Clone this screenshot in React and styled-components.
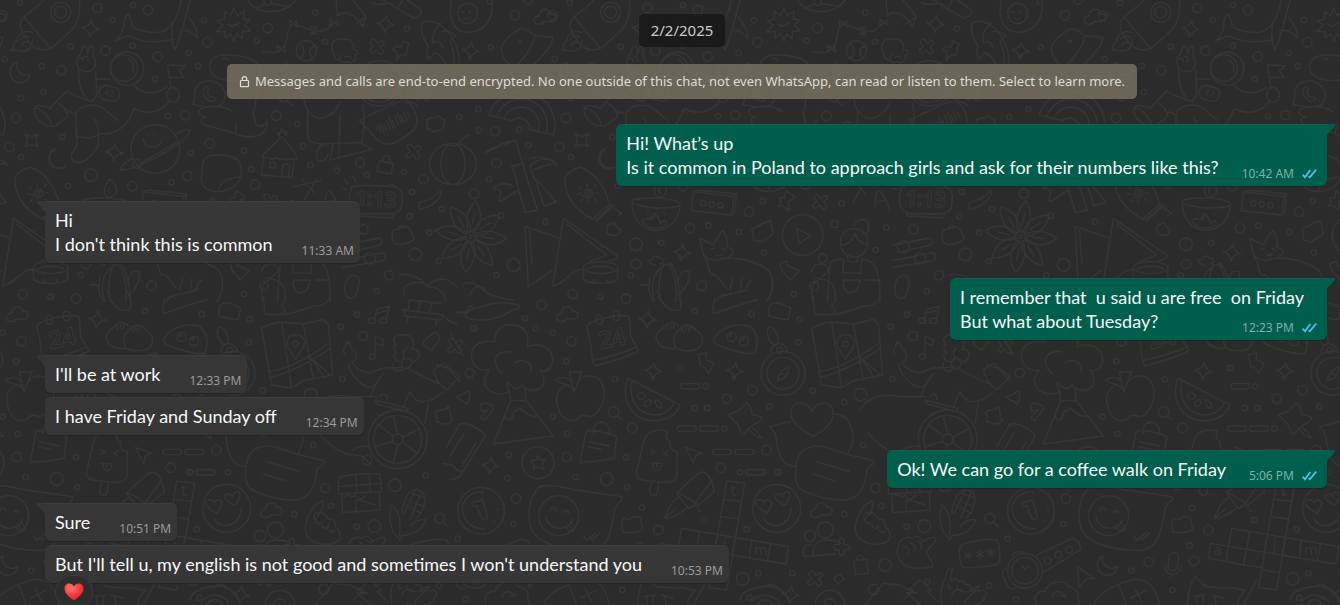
import React from 'react'
import styled, { createGlobalStyle, css } from 'styled-components'

const GlobalStyle = createGlobalStyle`
    * {
        box-sizing: border-box;
    }
    body {
        margin: 0;
        background-color: #2b2b2b;
        font-family: "Segoe UI", "Noto Sans", "Open Sans", sans-serif;
    }
`

const Chat = styled.main`
    position: relative;
    z-index: 0;
    height: 100vh;
    overflow: hidden;
    padding: 14px 13px 0 45px;
    display: flex;
    flex-direction: column;
`

const Wallpaper = styled.svg`
    position: absolute;
    inset: 0;
    z-index: -1;
    width: 100%;
    height: 100%;
`

const Notices = styled.header`
    display: flex;
    flex-direction: column;
    align-items: center;
    gap: 17px;
    margin-bottom: 25px;
    padding-right: 8px;
`

const DateChip = styled.time`
    padding: 0 12px;
    border-radius: 5px;
    background-color: rgba(24,24,24,0.85);
    color: #cbcbcb;
    font-size: 15px;
    line-height: 33px;
`

const EncryptionNotice = styled.button`
    display: flex;
    align-items: center;
    gap: 5px;
    padding: 0 12px;
    border: 0;
    border-radius: 5px;
    background-color: rgba(127,120,102,0.76);
    color: #dedcd7;
    font-family: inherit;
    font-size: 13px;
    line-height: 35px;
    white-space: nowrap;
`

const Thread = styled.section`
    display: flex;
    flex-direction: column;
    gap: 15px;
`

const Group = styled.div`
    display: flex;
    flex-direction: column;
    align-items: ${props => props.$mine ? 'flex-end' : 'flex-start'};
    gap: 4px;
`

const tail = css`
    &::before {
        content: "";
        position: absolute;
        top: 0;
        width: 8px;
        height: 11px;
        background-color: inherit;
        ${props => props.$mine
            ? 'left: 100%; clip-path: polygon(0 0, 100% 0, 100% 2px, 0 100%);'
            : 'right: 100%; clip-path: polygon(0 0, 100% 0, 100% 100%, 0 2px);'}
    }
`

const Bubble = styled.article`
    position: relative;
    padding: 7px ${props => props.$mine ? 10 : 6}px 4px 10px;
    border-radius: 6px;
    background-color: ${props => props.$mine ? '#005e4c' : '#363636'};
    box-shadow: 0 1px 1px rgba(0,0,0,0.2), inset 0 1px 0 rgba(255,255,255,0.04);
    color: #f8f8f8;
    font-family: "Segoe UI", Lato, "Noto Sans", sans-serif;
    font-size: 18px;
    line-height: 24px;
    white-space: pre;
    ${props => props.$tail && tail}
    ${props => props.$tail && (props.$mine ? 'border-top-right-radius: 0;' : 'border-top-left-radius: 0;')}
`

const Line = styled.div`
    padding-right: 13px;
`

const LastLine = styled.div`
    display: flex;
    align-items: flex-end;
    justify-content: space-between;
    gap: ${props => props.$mine ? 23 : 29}px;
`

const LastText = styled.span`
    padding-bottom: 3px;
`

const Meta = styled.span`
    display: flex;
    align-items: center;
    gap: 8px;
    color: ${props => props.$mine ? '#7fb0a6' : '#9b9b9b'};
    font-family: "Segoe UI", "Noto Sans", sans-serif;
    font-size: 12px;
    line-height: 17px;
`

const Reaction = styled.button`
    position: absolute;
    top: 30px;
    left: 10px;
    width: 38px;
    height: 34px;
    padding: 0;
    display: flex;
    align-items: center;
    justify-content: center;
    border: 1px solid #3a3a3a;
    border-radius: 17px;
    background-color: #2d2d2d;
`

const LockIcon = () => (
    <svg width="11" height="14" viewBox="0 0 11 14" fill="none" stroke="currentColor" strokeWidth="1.2" aria-hidden="true">
        <rect x="1.5" y="5.500" width="8" height="6.200" rx="0.800" />
        <path d="M3.300 5.500V3.800a2.200 2.200 0 0 1 4.400 0v1.700" />
    </svg>
)

const ReadIcon = () => (
    <svg width="15" height="10" viewBox="0 0 15 10" fill="none" stroke="#53bdeb" strokeWidth="1.8" aria-label="Read">
        <path d="M0.700 5.700 3 8.300 8.300 1M6.600 7.200 7.800 8.300 14.200 0.700" />
    </svg>
)

const HeartIcon = () => (
    <svg width="20" height="18" viewBox="0 0 21 19" aria-hidden="true">
        <defs>
            <radialGradient id="heart" cx="0.35" cy="0.25" r="0.8">
                <stop offset="0" stopColor="#ff7b74" />
                <stop offset="0.5" stopColor="#f8403f" />
                <stop offset="1" stopColor="#d81f2c" />
            </radialGradient>
        </defs>
        <path fill="url(#heart)" d="M10.500 18.500C6 15.300.5 11 .5 5.800.5 2.700 2.800.6 5.500.6c2.200 0 4 1.300 5 3.200 1-1.900 2.800-3.200 5-3.200 2.700 0 5 2.100 5 5.200 0 5.200-5.500 9.500-10 12.700z" />
    </svg>
)

// wallpaper tile, drawn at three times its size: 1650 x 1815 units
const smallDots = [
    [60, 8], [338, 60], [399, 15], [612, 61], [770, 122], [946, 38], [975, 126], [1221, 86], [212, 140],
    [398, 137], [566, 159], [594, 199], [465, 237], [14, 177], [125, 198], [131, 276], [63, 295], [504, 349],
    [892, 372], [187, 411], [63, 471], [573, 459], [732, 452], [910, 439], [931, 495], [1011, 512], [1101, 525],
    [1212, 516], [204, 558], [515, 547], [754, 508], [1236, 576], [1326, 627], [1228, 649], [1288, 698],
    [1316, 784], [1130, 874], [732, 882], [151, 890], [242, 826], [1470, 5], [1472, 142], [1435, 328],
    [1378, 351], [1437, 391], [1558, 389], [1585, 435], [1467, 538], [1502, 647], [1489, 826], [1636, 665],
    [334, 729], [475, 677], [638, 603], [567, 696], [642, 758], [1009, 683], [977, 750], [875, 610],
    [49, 1084], [8, 998], [435, 933], [605, 943], [749, 958], [746, 1027], [788, 1172], [1071, 944],
    [1022, 980], [1027, 1137], [228, 1372], [52, 1302], [232, 1462], [77, 1431], [570, 1417], [684, 1417],
    [1277, 1426], [883, 1543], [993, 1518], [1070, 1580], [590, 1588], [8, 1250], [1575, 954], [1607, 985],
    [1422, 985], [195, 1138], [390, 1104], [434, 1224], [472, 1224], [466, 1159], [523, 1286], [658, 1220],
    [940, 1335], [883, 1207], [1526, 1365], [1522, 1434], [1540, 1572], [1373, 1616], [276, 1523],
    [462, 1560], [625, 1720], [727, 1720], [598, 1793], [217, 1770], [1398, 1798], [1317, 1757],
    [1133, 1745], [94, 1712], [269, 1636],
]

const dots = [
    [8, 46], [292, 24], [444, 30], [803, 84], [622, 127], [316, 152], [473, 170], [184, 211], [48, 354],
    [556, 346], [829, 347], [28, 441], [629, 430], [1080, 488], [397, 559], [562, 528], [765, 554],
    [1271, 538], [1090, 688], [1167, 826], [455, 857], [68, 883], [228, 896], [1545, 46], [1585, -2],
    [1485, 394], [1489, 490], [1422, 581], [258, 792], [420, 685], [597, 635], [64, 1024], [1089, 1008],
    [50, 1371], [512, 1403], [649, 1350], [976, 1464], [1625, 915], [530, 1196], [607, 1171], [247, 1283],
    [1548, 1496], [325, 1590], [146, 1686], [282, 1683],
]

const bigDots = [
    [273, 526], [1246, 763], [1541, 795], [258, 733], [932, 1184], [170, 1437], [1185, 1456], [1123, 1578],
    [578, 1737], [1005, 1695],
]

const sparkles = [
    [272, 86], [1157, 72], [1412, 152], [857, 215], [343, 457], [396, 758], [292, 958], [310, 1113],
    [555, 1113], [1471, 1397], [722, 1784],
]

const crosses = [[1130, 140], [1240, 455], [810, 605], [1269, 280], [1365, 1038], [795, 1736]]

const clouds = [[1635, 50], [52, 942], [814, 1530]]

const petals = [10, 55, 95, 145, 190, 235, 282, 328]

const Sky = () => (
    <g>
        <path d="M62 65C68 45 120 20 135-5M62 65C55 90 75 110 90 130C110 155 145 155 165 135L215 90C235 70 245 20 236-5M75 55 150 143" />
        <circle cx="182" cy="37" r="30" />
        <circle cx="182" cy="37" r="18" />
        <path d="M97 98C75 90 50 100 52 122C38 125 42 140 36 150C48 146 56 156 72 153C92 150 97 135 97 120M62 118C68 106 80 106 90 112M65 136C72 122 84 124 90 132" />
        <path d="M348 122C360 110 370 95 372 75C370 60 375 50 385 42C390 55 398 65 396 80C410 88 430 98 470 98C515 95 535 50 545-5M348 122C360 118 375 108 385 108C420 125 470 130 520 118M520 65C512 90 515 130 524 150C540 125 550 70 572-5M548 92C565 88 580 100 592 114C597 95 580 70 566 52" />
        <path d="M701 23 712 47 732 33 730 57 750 60 733 75 751 93 728 94 726 116 710 101 702 124 692 101 676 114 675 94 650 95 669 76 652 62 673 58 674 34 692 47zM684 72 696 80 718 68" />
        <path d="M740-4C765 48 860 48 888-4M765 25 795 12M812 10 870 20" />
        <circle cx="803" cy="5" r="11" />
        <path d="M1008-4 1012 48C1030 28 1065 40 1088 80L1098 50 1055-4M1068 72 1096 52M1001 66C970 112 940 92 880 72C850 92 870 130 845 145C830 165 810 155 788 155" />
        <path d="M868 60 890 80 890 62 870 80zM932 80 948 102 933 102 950 82zM990 58 1014 74 1012 60 990 78zM832 136 856 156 854 138 834 156z" />
        <circle cx="919" cy="152" r="30" />
        <path d="M900 130C915 145 915 160 903 176M946 138C928 140 925 165 938 174" />
        <path d="M1115 8C1140 22 1155 5 1178 12M1140-5 1230 48C1248 62 1268 45 1262 28L1215-4M1196 20 1210-4" />
        <path d="M1263 80C1265 60 1295 58 1320 75C1350 90 1378 140 1378 195M1263 80C1265 110 1275 125 1284 138C1278 155 1282 172 1288 178L1303 158C1325 165 1335 180 1340 205M1322 70C1300 90 1295 110 1300 130C1315 118 1325 130 1330 145M1325 95C1345 92 1360 100 1368 108L1350 120M1350 120C1360 150 1365 170 1362 190" />
        <path d="M1190 155 1178 150C1184 138 1195 138 1203 142L1210 122 1228 132C1216 146 1222 160 1218 165L1203 164 1190 182z" />
        <circle cx="1403" cy="40" r="30" />
        <path d="M1355-4C1340 60 1365 97 1403 97C1455 97 1482 60 1475-4M1384 38 1392 36M1406 32 1412 40M1392 54C1398 60 1408 58 1412 52" />
        <path d="M1505 140C1510 120 1550 90 1565 85C1585 88 1590 100 1605 107L1657 112C1662 135 1630 165 1590 205M1505 140C1500 165 1520 190 1545 205M1605 107C1600 140 1570 180 1540 205" />
        <circle cx="1561" cy="124" r="3" />
        <path d="M52 187A31 31 0 1 0 91 222A28 28 0 0 1 52 187zM165 447A31 31 0 1 0 196 500A30 30 0 0 1 165 447z" />
        <path d="M76 402C90 412 100 412 115 402C106 416 106 426 114 440C100 432 90 432 76 440C84 426 84 416 76 402z" />
    </g>
)

const Astronaut = () => (
    <g>
        <path d="M238 208C228 190 228 172 240 164L248 142C256 134 264 142 262 164L270 140C280 136 284 146 278 168C290 180 290 205 272 213C258 216 245 214 238 208M236 178C244 170 252 176 248 186M252 170C262 166 268 176 262 184" />
        <path d="M235 205C235 250 245 285 262 292M287 212C290 240 288 260 291 288M288 237 330 237M398 252C420 278 450 292 500 262M103 325C108 310 135 318 150 325L200 273C225 290 250 295 277 305L302 262M103 325C98 350 130 385 165 378L202 350C202 330 190 318 175 310M103 325C118 320 150 350 155 378M200 345C205 330 212 335 228 345M228 345C235 310 290 310 310 325L354 362M228 345C225 380 230 400 232 420C235 450 200 460 220 485C250 498 270 470 294 440C295 410 300 380 283 355M232 408C250 416 280 415 294 405M294 400C350 410 390 370 402 325M402 325C440 345 480 340 510 303" />
        <circle cx="381" cy="206" r="50" />
        <circle cx="372" cy="204" r="40" />
        <path d="M386 178C400 186 404 200 398 214" />
        <g transform="rotate(14 328 280)">
            <rect x="298" y="259" width="60" height="42" rx="17" />
            <text x="328" y="290" fontSize="28" textAnchor="middle" stroke="none" fill="#353535">42</text>
        </g>
        <ellipse cx="519" cy="285" rx="19" ry="22" />
        <path d="M512 262 503 195 555 197 538 213 552 232 508 232" />
        <circle cx="466" cy="447" r="73" />
        <path d="M398 473C370 492 355 508 363 511C420 505 560 430 571 392C568 384 545 392 525 404M424 488 536 425M430 418C432 450 485 452 486 414M446 404 448 406M462 402 464 404" />
        <circle cx="410" cy="492" r="13" />
    </g>
)

const Creatures = () => (
    <g>
        <path d="M630 210C622 175 655 162 690 165C750 168 785 185 783 220C778 260 765 290 765 325C750 345 765 360 768 372C785 385 795 375 800 362C808 395 780 412 740 410C720 408 700 400 690 395L612 375C600 365 598 350 618 352C600 345 590 335 600 328C615 318 670 312 697 335M630 210C640 240 690 245 720 240M668 178C674 172 680 174 684 180M710 370 706 402M768 372 762 340" />
        <path d="M578 313C590 300 580 290 585 270C595 240 640 235 660 255C685 275 680 310 650 320M578 313C590 318 600 316 612 320M612 262C600 282 625 310 642 302C650 296 640 288 632 292C622 286 618 276 625 272C626 262 618 256 612 262" />
        <path d="M845 410 786 468C796 480 802 466 810 476C818 484 824 468 834 476C842 484 850 468 858 478C868 484 876 472 890 478C890 455 860 430 845 410zM790 476 784 525 875 533 882 482M845 528 847 502C850 488 870 490 868 504L866 531M838 408C828 395 838 395 840 402C842 382 852 382 850 400C858 388 866 394 856 406" />
        <circle cx="818" cy="495" r="9" />
        <circle cx="852" cy="288" r="17" />
        <path d="M862 302 876 316M1000 155C985 130 1010 108 1030 120C1050 112 1065 130 1060 148C1080 150 1075 165 1064 165C1075 180 1055 192 1040 185C1020 195 1015 175 1025 165M1000 155C998 170 1010 180 1020 180M1035 172C1045 166 1052 172 1055 176" />
        <circle cx="1138" cy="250" r="57" />
        <circle cx="1138" cy="250" r="68" />
        <path d="M912 262C915 205 970 185 1010 205C1050 220 1060 250 1058 275M912 262C905 320 930 355 965 355C990 350 1010 330 1020 305M922 330C925 370 918 400 928 420C945 435 965 430 1000 430M1020 345 1016 478M1088 310C1095 350 1090 400 1085 430L1115 448 990 480 1000 430 1085 428M952 480C948 455 952 440 968 435M952 480C965 490 980 480 985 460" />
        <path d="M1078 360 1190 308C1222 298 1240 312 1250 350C1256 380 1245 395 1185 428C1150 442 1130 420 1112 398z" />
        <path d="M1128 382 1132 390M1134 374 1142 396M1142 370 1152 400M1152 372 1160 390M1160 364 1170 388M1166 352 1180 386M1176 360 1186 380M1184 346 1196 376M1192 340 1206 372M1202 346 1212 364M1210 336 1222 362M1222 338 1228 350" />
        <path d="M1280 362C1290 345 1300 362 1308 350C1320 342 1320 360 1332 358C1340 366 1325 374 1332 386C1325 396 1315 385 1308 394C1298 400 1298 386 1284 388C1274 380 1290 372 1280 362z" />
        <path d="M608 490C615 460 650 462 685 468C720 476 730 495 722 530C712 562 690 570 660 575C625 575 600 560 604 530zM655 575C660 545 680 535 722 530" />
        <path d="M1138 482 1180 492 1172 522 1132 514zM1148 482C1150 462 1170 458 1170 488" />
        <path d="M1228 205C1235 190 1250 195 1245 210C1240 240 1215 245 1222 275M1205 222 1250 238M1218 300C1230 310 1245 305 1255 320" />
    </g>
)

const Still = () => (
    <g>
        <path d="M45 540C45 520 80 500 95 503C140 520 170 570 180 620C165 638 150 650 135 660C90 640 45 600 45 540zM130 655 180 612 190 618 140 663M192 625 215 640 205 646M175 672C165 690 170 705 185 705C205 710 215 695 208 685C195 685 200 668 190 668C182 668 188 678 175 672" />
        <path d="M112 578C112 572 120 572 120 580C118 590 104 588 104 576C106 564 126 564 128 580C126 596 104 598 98 584M112 552 112 560M86 560 94 566M84 582 92 582M92 604 98 598M114 600 114 608M134 596 140 602M136 578 144 578M132 560 138 554" />
        <path d="M247 603C260 590 380 590 390 612C392 650 360 692 318 692C270 690 245 650 247 603zM250 610C290 625 350 628 388 618M330 537C312 558 305 585 328 592C355 590 358 560 330 537zM330 562C322 575 328 580 332 582M275 660C300 648 308 670 312 640C328 650 330 660 330 672C345 655 350 662 348 676C330 690 290 690 275 660zM292 632 294 634M318 626 320 628M342 640 344 642" />
        <path d="M430 575 552 590 545 645 424 632zM430 575 445 570 560 582 552 590M560 582 553 640 545 645" />
        <circle cx="460" cy="610" r="8" />
        <circle cx="485" cy="613" r="8" />
        <circle cx="511" cy="616" r="8" />
        <path d="M708 572 735 590 728 600C718 596 710 610 718 618L714 632 700 616 684 620 694 604C684 600 690 590 704 594z" />
        <path d="M882 560 964 542M905 535 945 580M910 605 948 540M975 620C978 590 975 575 988 572C1000 580 1008 600 1020 632M985 605 1005 600" />
        <path d="M1055 560C1080 555 1140 555 1190 562C1212 570 1208 600 1203 625C1195 648 1150 642 1080 640C1050 635 1045 610 1050 580zM1158 558C1165 552 1185 552 1188 562M1070 640 1072 648 1180 654 1182 644M1058 528 1068 545M1034 540 1044 552M1028 566 1040 568" />
        <text x="1127" y="619" fontSize="62" fontWeight="700" strokeWidth="3" textAnchor="middle" transform="rotate(3 1126 600)">1:13</text>
        <path d="M1180 690 1222 680C1235 690 1232 700 1242 712C1240 728 1215 732 1190 734C1176 725 1172 705 1180 690zM1195 688C1195 676 1212 672 1214 682" />
        <path d="M1030 735 1138 714C1150 720 1148 732 1138 736L1040 758M1028 782 1150 758C1160 765 1158 778 1150 782L1028 802" />
        <circle cx="1060" cy="740" r="18" />
        <circle cx="1110" cy="775" r="17" />
        <ellipse cx="1359" cy="492" rx="70" ry="62" />
        <ellipse cx="1359" cy="492" rx="36" ry="62" />
        <path d="M1342 432C1358 440 1372 438 1380 432C1380 418 1395 412 1410 405M1258 608C1290 600 1310 590 1322 570C1330 590 1300 620 1258 628z" />
        <path d="M1467 345A98 98 0 0 1 1660 405L1590 388A33 33 0 0 0 1536 362zM1490 350A75 75 0 0 1 1638 400M1512 356A54 54 0 0 1 1614 394" />
        <path d="M1548 420 1455 458C1480 440 1520 425 1548 420C1552 440 1560 470 1570 490L1535 500C1545 520 1552 545 1555 570L1500 605C1490 590 1520 570 1480 565C1500 545 1530 550 1540 560M1570 490C1572 520 1600 590 1612 630L1576 638 1556 570M1590 500C1605 480 1640 465 1670 490C1640 492 1620 500 1600 510M1590 500C1600 540 1610 545 1618 548L1668 606 1632 618 1610 550M1590 475C1620 468 1660 475 1672 498" />
    </g>
)

const Table = () => (
    <g transform="translate(-300 0)">
        <path d="M225 680 325 713M225 680 235 860 305 812M238 690 246 790M340 655 308 858C350 850 370 800 402 810M340 655 500 765C505 775 490 780 475 782M350 672 470 765 420 785" />
        <ellipse cx="452" cy="803" rx="52" ry="18" />
        <path d="M400 803V835C410 855 490 855 503 835V803M412 808C430 795 475 795 492 808M432 838V848M470 838V848" />
        <path d="M600 830C590 870 600 890 610 905M660 790C615 800 595 850 615 905M640 792C625 830 625 870 632 905M655 792C680 830 680 870 678 905M660 790C690 820 690 880 690 905M615 795C590 790 590 775 605 780C610 765 625 765 628 775C640 770 650 785 630 792M682 850C690 815 700 810 718 815C722 840 705 870 690 880M572 855C590 850 600 860 596 872" />
        <path d="M750 715 790 735C800 715 810 695 820 692C830 710 835 725 830 740L850 752C850 765 838 770 830 775C815 770 800 790 790 778C775 780 765 770 760 765zM782 748 792 744M815 744 826 752M800 765C806 770 812 768 815 762M830 775C870 770 930 790 955 810C975 835 970 880 950 905M762 770C780 790 770 810 785 825C800 820 800 830 830 865M848 835 840 870M876 835 872 865M905 840C890 855 890 860 890 870M800 905C810 880 840 885 890 870" />
        <path d="M905 690C915 675 925 685 935 672L962 662 970 700C960 712 945 716 935 726L912 720C905 710 915 705 905 690z" />
        <circle cx="1058" cy="705" r="61" />
        <path d="M1040 685 1082 706 1048 731zM1147 662 1165 665 1162 683 1143 680z" />
        <path d="M990 790 1010 784 1012 796 1048 812 1022 840 996 812z" />
        <path d="M1172 730C1170 700 1190 685 1215 686C1245 690 1258 710 1250 740C1245 765 1225 775 1205 770C1180 765 1172 750 1172 730zM1175 735C1200 735 1210 715 1215 700C1225 730 1240 725 1252 735M1212 685C1210 660 1250 645 1256 675C1260 695 1248 702 1240 700M1192 768 1195 785 1222 785 1225 770M1132 905 1140 790C1150 775 1170 778 1180 778L1180 818 1232 820 1235 778C1270 778 1292 800 1290 905M1182 840H1230C1228 890 1180 890 1180 850zM1248 840H1290M1088 905C1078 860 1095 835 1120 838C1150 845 1160 870 1155 905M1085 815C1085 790 1130 780 1135 810C1125 830 1110 835 1095 835" />
        <circle cx="1118" cy="775" r="13" />
        <circle cx="1092" cy="858" r="13" />
        <path d="M1336 880C1330 850 1345 825 1360 826C1385 830 1378 850 1370 880C1360 905 1340 895 1336 880z" />
    </g>
)

const Flower = () => (
    <g transform="translate(1412 710)">
        <circle r="15" />
        <circle r="5" />
        {petals.map(angle => (
            <path key={angle} transform={`rotate(${angle})`} d="M-10-15C-30-50-22-80-4-108C22-80 26-50 10-15M-2-34 0-70" />
        ))}
    </g>
)

const Park = () => (
    <g transform="translate(0 900)">
        <path d="M1200-75C1230-85 1270-60 1280-40C1320-80 1350-60 1370-40M1215-10C1200-40 1230-60 1270-50M1285-40C1310-40 1340-20 1335 0M1212 30 1330 45 1325 60 1215 48zM1225 30 1228 0 1325 10M1255 30 1260 5M1290 35 1295 8M1225 50 1220 68M1310 60 1308 76M1335 50C1345 60 1360 70 1370 72" />
        <path d="M1122 60 1130 28 1168 18 1160 58M1130 40 1165 30" />
        <ellipse cx="1116" cy="62" rx="11" ry="8" />
        <ellipse cx="1150" cy="62" rx="11" ry="8" />
        <path d="M1124 168 1126 110 1150 118 1148 136 1128 130" />
        <ellipse cx="1117" cy="170" rx="9" ry="8" />
        <path d="M110 78C120 60 200 42 235 48C242 55 240 100 242 110L266 152C240 170 180 185 135 198L128 182 118 110zM128 182C160 175 220 160 262 140M138 60C132 40 155 40 158 58C160 78 140 78 138 60zM190 50C185 30 208 28 210 48C212 66 192 66 190 50z" />
        <text x="188" y="140" fontSize="72" fontWeight="700" strokeWidth="3" textAnchor="middle" transform="rotate(-12 188 120)">24</text>
        <path d="M375 145C330 150 310 120 322 100C335 80 345 85 350 72C360 65 375 65 385 78M372 130C365 100 385 95 400 78C420 70 430 80 440 92C460 105 465 130 445 145C420 158 375 155 372 130zM350 75 354 88M362 74 362 86M372 74 370 86M396 84 400 96M408 78 408 92M420 80 416 94" />
        <path d="M490 125C500 85 560 65 600 80C625 100 625 135 615 160C580 165 500 140 490 125z" />
        <circle cx="545" cy="110" r="14" />
        <circle cx="582" cy="123" r="14" />
        <circle cx="541" cy="105" r="4" />
        <circle cx="578" cy="117" r="4" />
        <ellipse cx="668" cy="108" rx="14" ry="28" transform="rotate(-20 668 108)" />
        <path d="M664 158C660 125 705 120 712 155" />
        <circle cx="689" cy="151" r="9" />
        <circle cx="699" cy="220" r="66" />
        <circle cx="699" cy="220" r="48" />
        <path d="M682 242C685 220 700 205 716 202C718 220 705 238 682 242zM693 222 705 224" />
        <path d="M785 85C800 75 830 68 845 66L910 72 970 58 985 72 998 225 910 242 875 264 815 255zM845 66 875 264M910 72 940 240M805 215C870 210 960 150 985 130M808 232C860 225 950 175 990 145M940 180 990 225M930 170 975 235M887 178C870 150 855 140 862 120C870 98 910 100 914 125C912 150 895 160 887 178z" />
        <circle cx="887" cy="132" r="8" />
        <path d="M1035 165C1025 150 1035 145 1042 125C1052 130 1050 145 1060 150C1075 165 1070 185 1055 185C1060 200 1080 215 1110 220C1160 190 1190 210 1205 200M1045 190C1050 225 1080 255 1110 262C1130 260 1140 230 1150 220M1230 210C1260 225 1290 240 1315 250M1130 250 1110 295M1230 275C1250 320 1290 310 1330 275M1230 275 1210 320M1285 310 1275 370" />
        <circle cx="1219" cy="190" r="15" />
        <path d="M1206 184C1180 190 1175 160 1190 160C1175 140 1185 130 1190 135C1170 115 1190 100 1210 105C1235 100 1250 130 1235 148C1265 145 1265 180 1235 188M1180 190C1175 215 1200 220 1208 205M1215 175C1205 160 1210 150 1220 145" />
        <path d="M1270 125 1305 95 1320 110 1315 125 1295 150 1270 135zM1310 195 1345 205M1300 210 1330 190 1380 230 1340 270 1310 240z" />
        <circle cx="1193" cy="418" r="88" />
        <circle cx="1193" cy="418" r="72" />
        <circle cx="1193" cy="418" r="16" />
        <path d="M1193 402 1180 348M1208 412 1258 385M1207 426 1252 460M1193 434 1180 486M1178 424 1125 440M1180 408 1135 375M1126 300 1225 325 1220 335 1130 312zM1140 290C1150 275 1165 285 1160 300M930 330C950 290 1000 280 1050 290L1130 290M955 400C980 430 1010 450 1035 460M1035 460 1090 470 1110 490M1055 450C1075 440 1090 435 1105 440" />
        <circle cx="1102" cy="480" r="14" />
        <path d="M90 490 108 395C120 385 180 400 200 410L192 475 130 485 106 485zM118 425 178 438M115 440 155 448M130 400C125 370 160 350 178 385V405" />
        <path d="M1015 535C1040 520 1120 520 1140 522L1145 575 1015 582zM1068 525 1070 578M1108 522 1110 575M1015 560 1145 550M1025 582 1028 638 1140 630 1138 575M1035 590C1040 575 1060 600 1065 585C1075 600 1090 600 1098 585M1068 635 1068 600C1085 600 1110 610 1125 615" />
        <path d="M1172 625C1165 680 1180 700 1192 710L1200 720 1205 708C1240 705 1265 690 1278 660C1260 655 1240 665 1230 680M1172 615C1195 630 1205 660 1198 705M1205 640C1210 600 1225 570 1250 568C1285 575 1280 620 1250 655M1215 615 1265 640M1222 600 1272 620M1235 580 1276 595M1232 655 1262 580M1212 640 1245 572" />
        <circle cx="1319" cy="655" r="15" />
        <path d="M1330 666 1345 680M1305 340C1320 320 1325 340 1345 320C1355 335 1345 350 1358 360C1340 380 1325 370 1315 365C1300 370 1320 350 1305 340z" />
    </g>
)

const Lower = () => (
    <g transform="translate(-300 900)">
        <path d="M20 35C50 50 110-10 205 15C215 25 200 30 190 28C150 60 80 70 45 50C50 30 70 30 68 20C60 10 45 30 45 50M40-45C50-60 70-50 90-40C100-30 110-10 190 0M60-10C65-40 90-50 105-30M620-30C630 10 660 40 690 28C700 0 685-10 680-30M795-5C785 20 790 35 790 40C820 35 870 10 920 0M1090-10 1095 42C1130 45 1160 45 1180 38L1240 18C1270 20 1285 5 1290-10M1150 10C1135 25 1160 20 1155 38" />
        <path d="M958 22C970 0 980 12 990 10L1022 24 1015 58C995 60 970 50 956 48z" />
        <path d="M178 275C150 290 105 280 102 240C105 230 110 225 118 210C80 215 60 190 65 155C75 125 110 120 135 125C130 95 155 70 190 75C225 78 238 105 232 140C270 125 310 145 308 185C300 215 280 215 270 210C290 240 285 275 240 270C225 268 222 262 216 255C205 270 190 270 172 245C170 260 178 275 178 275M155 220C125 190 130 150 185 155M196 188C215 175 250 185 242 215M178 270 182 302H228L226 268M182 302 130 432 310 408 228 302M182 302C170 335 155 355 175 360C190 360 188 340 196 330C205 340 205 320 212 325C225 340 240 350 262 348" />
        <path d="M2 100 38 165M-10 200 30 245M20 290C40 285 50 275 58 272C60 290 60 300 52 312C45 305 25 300 20 290zM92 318C95 305 110 308 130 320C135 330 110 350 105 360C95 360 92 352 95 350L115 328 95 335z" />
        <path d="M44 218 52 207 66 207 74 218 66 232 52 232z" />
        <path d="M372 275 358 216 395 216zM372 275C365 250 335 255 315 240C335 230 355 230 362 245M385 245C400 220 450 220 460 260C470 310 440 350 415 350C400 340 385 350 385 355C360 370 335 360 325 325C315 295 320 270 345 258" />
        <path d="M535 235 690 315C675 360 610 375 565 350C530 325 515 280 535 235zM545 240C535 300 560 340 610 345C640 345 665 330 672 308M562 290C565 275 580 275 588 288C580 300 570 302 562 290zM583 315C585 300 600 295 602 302C605 315 590 325 583 315zM615 300C630 298 640 318 632 325C618 322 615 310 615 300z" />
        <path d="M745 165 770 158 768 180 792 190 775 222 768 205 752 198z" />
        <rect x="692" y="251" width="57" height="16" rx="8" />
        <rect x="682" y="378" width="57" height="16" rx="8" />
        <rect x="748" y="378" width="57" height="16" rx="8" />
        <rect x="788" y="448" width="57" height="16" rx="8" />
        <rect x="855" y="448" width="57" height="16" rx="8" />
        <rect x="888" y="509" width="57" height="16" rx="8" />
        <circle cx="491" cy="336" r="16" />
        <path d="M502 348 516 360" />
        <path d="M835 345C850 335 860 340 868 330L890 308 900 320 905 342 935 352C930 375 912 370 905 378C890 385 890 400 880 405C868 395 870 380 862 372zM905 380C915 390 925 395 934 414C920 410 905 400 898 388" />
        <path d="M1088 410C1060 390 1020 370 1022 335C1025 300 1075 300 1086 335C1100 300 1150 300 1150 340C1150 375 1115 395 1088 410zM958 380 1022 364M958 380C985 400 975 420 985 450C990 480 1010 500 1036 498M1150 342C1190 340 1215 380 1208 430L1195 458M1060 450C1100 425 1140 445 1190 462L1270 482C1280 490 1255 500 1250 510C1245 570 1220 600 1180 600C1130 600 1060 580 1045 560C1030 530 1035 470 1060 450zM1100 485 1198 514M1090 522 1152 542" />
        <path d="M582 420C590 395 620 385 652 393C645 410 650 420 662 425C655 440 670 455 682 455L680 530C675 548 655 548 640 547L575 540C555 530 558 520 562 505zM606 545 598 572C600 590 620 590 622 575L626 548M603 450 615 456 604 462M655 452 640 460 654 468M605 490 635 490C635 520 610 518 608 492M620 490V502M706 442 758 460 738 465 730 490z" />
        <path d="M680 580C700 560 740 520 755 516C775 515 790 550 793 575L745 615M680 580 715 625 740 612M680 580C690 575 720 600 740 612M765 518C785 530 785 540 780 548L735 610M688 592C665 600 655 630 643 655C655 660 690 640 710 625M645 655 675 626M745 615C740 625 745 632 755 634" />
        <path d="M830 543 884 550 830 870 776 862zM824 598 875 604M814 650 866 657M695 685 1016 740 1008 792 632 730M695 685 685 738M748 695 740 748M803 702 792 755M905 720 898 775M962 730 952 782M855 710 846 765M790 810 838 818M632 730 625 775 680 784M685 738 678 784M740 748 730 795 680 784M730 795 785 802" />
        <g fill="#353535" stroke="none">
            <text x="842" y="588" fontSize="48">t</text>
            <text x="818" y="746" fontSize="42">j</text>
            <text x="912" y="764" fontSize="44">m</text>
            <text x="642" y="764" fontSize="42">a</text>
        </g>
        <circle cx="980" cy="625" r="72" />
        <path d="M950 640C925 625 912 615 918 605C925 595 940 600 943 608C948 595 965 600 966 610C965 620 955 630 950 640zM1004 616C985 605 972 598 975 588C982 578 995 580 998 590C1002 570 1020 572 1020 585C1018 600 1010 610 1004 616zM942 655C955 690 1020 685 1024 625" />
        <path d="M5 495C20 500 10 510 38 515L105 410C100 390 50 365 30 372M5 495-20 490M30 372-10 440M42 400 0 470M80 425 35 500M38 515C30 535 10 538 0 538" />
        <circle cx="264" cy="488" r="48" />
        <path d="M264 466 270 480 286 480 276 492 280 508 264 500 250 508 252 492 242 482 258 480z" />
        <circle cx="93" cy="632" r="70" />
        <path d="M38 610C30 650 60 690 105 686M98 575A56 56 0 0 0 40 612M98 600 112 650C110 660 98 660 94 652L80 616 70 620C62 612 66 606 74 606zM128 596 130 597M142 628 144 630M132 664 134 666M98 578 99 580" />
        <path d="M270 560C300 550 350 565 380 570L515 590C525 600 500 610 495 625C485 700 470 750 420 752C340 750 270 735 245 690C230 650 235 590 270 560zM400 708 410 722 436 700M420 712 426 720 450 698M300 632C305 618 315 622 318 632M340 638C345 628 355 630 356 640M288 648C290 690 350 700 368 660M345 680 358 692C370 700 380 685 370 675L360 664M352 672 364 685" />
        <circle cx="326" cy="647" r="60" />
        <path d="M515 665 520 655 540 658C545 645 570 650 572 658L578 690C560 698 530 700 518 696z" />
        <circle cx="1126" cy="690" r="24" />
        <circle cx="1080" cy="708" r="17" />
        <path d="M1090 768C1085 730 1110 720 1130 720C1150 720 1165 725 1172 730M1090 768 1155 762M1062 770C1055 745 1065 732 1085 735M1062 770 1090 768M1168 718C1170 712 1180 712 1182 720V733L1195 735C1202 738 1202 748 1192 750H1182V762C1178 768 1170 766 1168 762V750H1155C1148 745 1150 735 1158 733H1168z" />
        <path d="M1262 605C1272 600 1272 610 1262 635L1245 660C1235 640 1250 635 1258 640C1265 635 1280 645 1285 658C1300 655 1308 665 1305 680C1320 690 1325 710 1315 722C1280 745 1230 730 1218 700C1210 670 1230 620 1262 605M1245 660C1250 672 1258 675 1262 668M1265 675C1270 688 1285 688 1286 675M1288 690C1294 698 1300 700 1302 692" />
        <path d="M1212 782 1250 778 1255 820 1216 824zM1220 780C1218 762 1240 762 1240 778M1152 835 1168 822 1184 838 1164 852zM1255 868 1263 853 1280 853 1288 868 1280 882 1263 882z" />
    </g>
)

const Bottom = () => (
    <g transform="translate(1020 900)">
        <path d="M210 740C215 725 300 715 320 720C332 740 332 780 325 790C310 800 230 805 220 802C208 790 206 760 210 740zM236 755V778M226 760 246 772M246 760 226 772M270 752V775M260 757 280 769M280 757 260 769M302 748V771M292 753 312 765M312 753 292 765" />
        <circle cx="405" cy="812" r="52" />
        <circle cx="405" cy="812" r="40" />
        <path d="M396 796 405 810 414 800M365 770C370 755 385 752 398 757M350 805C330 815 335 830 345 840C350 865 365 870 375 865M440 765 540 718C560 715 575 730 570 750L455 820" />
        <circle cx="473" cy="782" r="10" />
        <circle cx="505" cy="765" r="10" />
        <circle cx="537" cy="749" r="10" />
        <path d="M562 800 614 836 590 835 568 862zM638 768A31 31 0 1 0 684 800A30 30 0 0 1 638 768z" />
        <rect x="836" y="758" width="28" height="54" rx="14" transform="rotate(8 850 785)" />
        <path d="M824 795C825 830 865 835 872 800M843 824 840 832" />
        <path d="M22 765C20 720 45 705 65 715C85 700 100 720 95 725C110 720 130 705 137 715C135 735 110 745 110 760C120 775 130 795 128 800C80 810 40 810 22 765M40 740C50 735 65 755 55 762M58 728C70 728 80 745 72 752M80 722C92 725 98 735 92 744" />
        <path d="M168 830C170 810 180 800 187 805C185 820 180 830 182 845C190 835 200 832 205 845C215 838 225 845 228 855C240 850 245 860 242 868L268 858C265 870 230 890 222 910M168 830C150 870 150 880 155 915M175 850C175 865 180 870 186 865M200 855C200 870 205 875 210 868" />
        <path d="M-80 920-20 850 30 855 80 880 50 878 100 920M440 915C425 890 445 870 465 875C470 845 520 835 535 860C560 865 570 880 562 900C570 905 568 915 568 915M488 890C490 870 515 870 522 888L528 882M524 890 512 888" />
        <path d="M610 920C620 880 670 855 730 838C770 835 800 860 808 920M688 858 712 920M770 870 720 895M735 865 755 905M890 920C900 890 890 870 915 828C930 850 945 855 950 860L1010 865C1030 860 1050 870 1065 870C1050 890 1040 900 1045 920M912 890 945 885M920 890 922 920M940 888 938 920M965 885 1000 895M975 890 978 920M1200 900C1205 870 1250 860 1290 858C1320 865 1340 880 1345 900M1230 920C1235 880 1300 870 1320 915M1250 920C1255 895 1290 890 1300 920M1280 858C1285 850 1300 850 1310 862" />
        <circle cx="1470" cy="915" r="44" />
        <circle cx="1470" cy="915" r="18" />
        <path d="M1740 840 1705 870H1720L1690 900M1740 840 1775 872 1760 874 1795 905M1060 915 1100 840M1835 885C1850 850 1870 890 1900 870C1920 880 1935 860 1940 880C1930 920 1870 930 1850 910" />
    </g>
)

const Background = () => (
    <Wallpaper aria-hidden="true" fontFamily="Noto Sans, sans-serif">
        <defs>
            <g id="doodles" transform="scale(0.33333)" fill="none" stroke="#353535" strokeWidth="4" strokeLinecap="round" strokeLinejoin="round">
                {smallDots.map(([x, y]) => <circle key={`${x} ${y}`} cx={x} cy={y} r="8" />)}
                {dots.map(([x, y]) => <circle key={`${x} ${y}`} cx={x} cy={y} r="14" />)}
                {bigDots.map(([x, y]) => <circle key={`${x} ${y}`} cx={x} cy={y} r="19" />)}
                {sparkles.map(([x, y]) => (
                    <path key={`${x} ${y}`} transform={`translate(${x} ${y}) rotate(6)`} d="M0-26Q4-4 26 0Q4 4 0 26Q-4 4-26 0Q-4-4 0-26z" />
                ))}
                {crosses.map(([x, y]) => (
                    <path key={`${x} ${y}`} transform={`translate(${x} ${y}) rotate(52)`} d="M-6-8V-22Q0-30 7-22V-8H22Q30 0 22 7H7V22Q0 30-6 22V7H-22Q-30 0-22-8z" />
                ))}
                {clouds.map(([x, y]) => (
                    <path key={`${x} ${y}`} transform={`translate(${x} ${y})`} d="M-24 22C-38 18-34-2-18-2C-16-26 14-28 16-8C32-12 40 10 24 14C10 18 4 12-2 14C-8 24-16 24-24 22z" />
                ))}
                <Sky />
                <Astronaut />
                <Creatures />
                <Still />
                <Table />
                <Flower />
                <Park />
                <Lower />
                <Bottom />
            </g>
            <pattern id="tile" width="550" height="605" patternUnits="userSpaceOnUse">
                <use href="#doodles" x="-550" />
                <use href="#doodles" />
                <use href="#doodles" x="550" />
            </pattern>
        </defs>
        <rect width="100%" height="100%" fill="url(#tile)" />
    </Wallpaper>
)

const groups = [
    { mine: true, messages: [{ lines: ['Hi! What’s up', 'Is it common in Poland to approach girls and ask for their numbers like this?'], time: '10:42 AM' }] },
    { messages: [{ lines: ['Hi', "I don't think this is common"], time: '11:33 AM' }] },
    { mine: true, messages: [{ lines: ['I remember that  u said u are free  on Friday', 'But what about Tuesday?'], time: '12:23 PM' }] },
    { messages: [{ lines: ["I'll be at work"], time: '12:33 PM' }, { lines: ['I have Friday and Sunday off'], time: '12:34 PM' }] },
    { mine: true, messages: [{ lines: ['Ok! We can go for a coffee walk on Friday'], time: '5:06 PM' }] },
    { messages: [{ lines: ['Sure'], time: '10:51 PM' }, { lines: ["But I'll tell u, my english is not good and sometimes I won't understand you"], time: '10:53 PM', loved: true }] },
]

const Message = ({ mine, first, lines, time, loved }) => (
    <Bubble $mine={mine} $tail={first}>
        {lines.slice(0, -1).map(line => <Line key={line}>{line}</Line>)}
        <LastLine $mine={mine}>
            <LastText>{lines[lines.length - 1]}</LastText>
            <Meta $mine={mine}>
                <time>{time}</time>
                {mine && <ReadIcon />}
            </Meta>
        </LastLine>
        {loved && <Reaction aria-label="Heart reaction"><HeartIcon /></Reaction>}
    </Bubble>
)

const App = () => (
    <>
        <GlobalStyle />
        <Chat>
            <Background />
            <Notices>
                <DateChip>2/2/2025</DateChip>
                <EncryptionNotice>
                    <LockIcon />
                    Messages and calls are end-to-end encrypted. No one outside of this chat, not even WhatsApp, can read or listen to them. Select to learn more.
                </EncryptionNotice>
            </Notices>
            <Thread>
                {groups.map(group => (
                    <Group key={group.messages[0].time} $mine={group.mine}>
                        {group.messages.map((message, index) => (
                            <Message key={message.time} mine={group.mine} first={index === 0} {...message} />
                        ))}
                    </Group>
                ))}
            </Thread>
        </Chat>
    </>
)

export default App
